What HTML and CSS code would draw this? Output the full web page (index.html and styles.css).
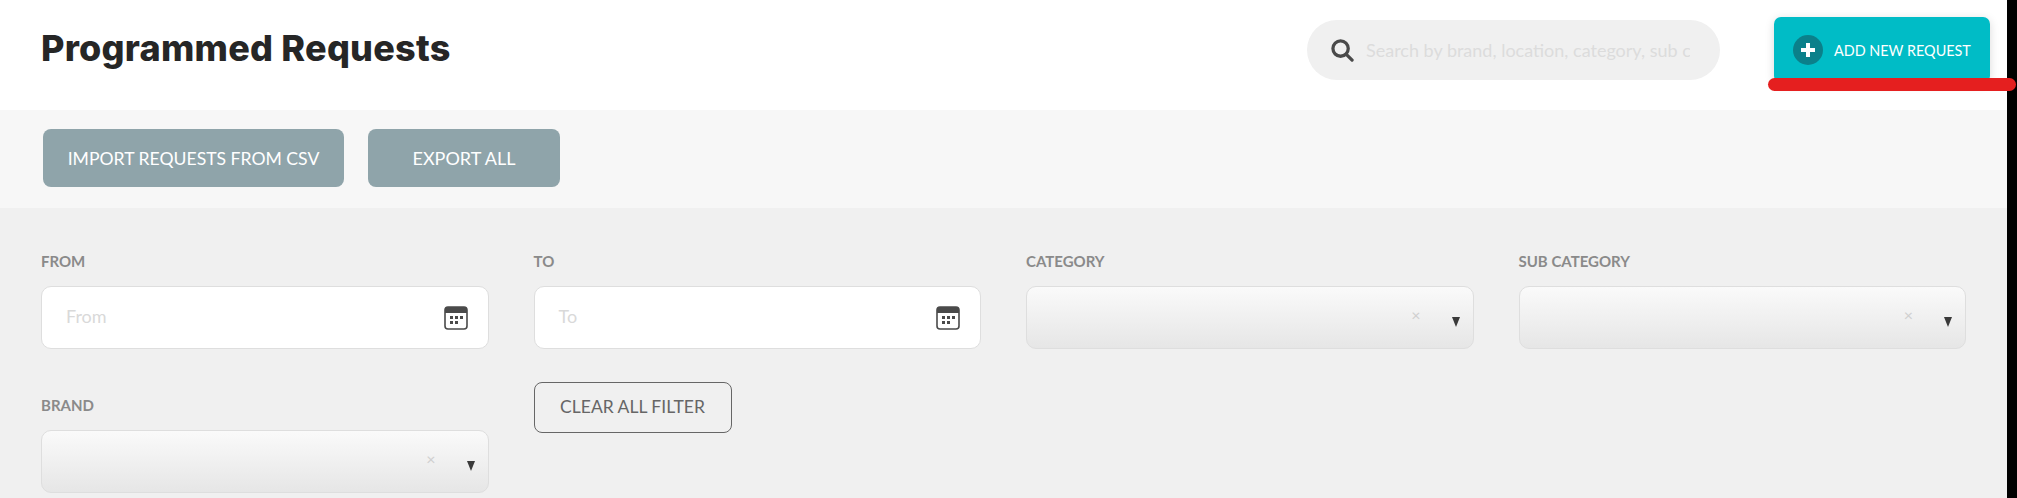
FILE: index.html
```html
<!DOCTYPE html>
<html lang="en">
<head>
  <meta charset="UTF-8">
  <title>Programmed Requests</title>
  <link rel="stylesheet" href="styles.css">
</head>
<body>

<div class="sivu">
  <header class="otsikko">
    <h1>Programmed Requests</h1>
    <div class="haku">
      <svg class="haku-ikoni" viewBox="0 0 24 24" width="23" height="23"><circle cx="10" cy="10" r="8" fill="none" stroke="#4a4a4a" stroke-width="3.4"/><path d="M16 16l6 6" stroke="#4a4a4a" stroke-width="3.4" stroke-linecap="round"/></svg>
      <span class="haku-teksti">Search by brand, location, category, sub c</span>
    </div>
    <a class="lisaa-nappi">
      <span class="plus">
        <svg viewBox="0 0 16 16" width="16" height="16"><path d="M8 1v14M1 8h14" stroke="#fff" stroke-width="4"/></svg>
      </span>
      ADD NEW REQUEST
    </a>
  </header>

  <div class="toiminnot">
    <a class="harmaa-nappi tuonti">IMPORT REQUESTS FROM CSV</a>
    <a class="harmaa-nappi vienti">EXPORT ALL</a>
  </div>

  <section class="suodattimet">
    <div class="kentta">
      <label>FROM</label>
      <div class="syote">
        <span class="vihje">From</span>
        <svg class="kalenteri" viewBox="0 0 24 24" width="24" height="24"><rect x="1" y="1" width="22" height="22" rx="3" fill="#fff" stroke="#4a4a4a" stroke-width="1.6"/><path d="M1 4a3 3 0 0 1 3-3h16a3 3 0 0 1 3 3v3H1z" fill="#4a4a4a"/><path d="M6 10h3v3H6zM11 10h3v3h-3zM16 10h3v3h-3zM6 15h3v3H6zM11 15h3v3h-3z" fill="#4a4a4a"/></svg>
      </div>
    </div>
    <div class="kentta">
      <label>TO</label>
      <div class="syote">
        <span class="vihje">To</span>
        <svg class="kalenteri" viewBox="0 0 24 24" width="24" height="24"><rect x="1" y="1" width="22" height="22" rx="3" fill="#fff" stroke="#4a4a4a" stroke-width="1.6"/><path d="M1 4a3 3 0 0 1 3-3h16a3 3 0 0 1 3 3v3H1z" fill="#4a4a4a"/><path d="M6 10h3v3H6zM11 10h3v3h-3zM16 10h3v3h-3zM6 15h3v3H6zM11 15h3v3h-3z" fill="#4a4a4a"/></svg>
      </div>
    </div>
    <div class="kentta">
      <label>CATEGORY</label>
      <div class="valinta"><span class="risti">×</span><span class="nuoli"></span></div>
    </div>
    <div class="kentta">
      <label>SUB CATEGORY</label>
      <div class="valinta"><span class="risti">×</span><span class="nuoli"></span></div>
    </div>
    <div class="kentta brandi">
      <label>BRAND</label>
      <div class="valinta"><span class="risti">×</span><span class="nuoli"></span></div>
    </div>
    <div class="kentta">
      <a class="tyhjenna">CLEAR ALL FILTER</a>
    </div>
  </section>
</div>

<div class="punainen-viiva"></div>

</body>
</html>
```

FILE: styles.css
```css
html, body {
  margin: 0;
  height: 498px;
  overflow: hidden;
  background: #000;
}
body {
  font-family: Lato, "Liberation Sans", sans-serif;
  position: relative;
}
a {
  text-decoration: none;
}
.sivu {
  width: 2007px;
  height: 498px;
  background: #f0f0f0;
}
.otsikko {
  height: 110px;
  padding: 0 17px 10px 41px;
  background: #fff;
  display: flex;
  align-items: center;
  box-sizing: border-box;
}
h1 {
  margin: 0 0 4px 0;
  font-family: Inter, Lato, sans-serif;
  font-size: 36px;
  font-weight: 800;
  letter-spacing: 0.24px;
  color: #262626;
  flex: 1;
}
.haku {
  width: 413px;
  height: 60px;
  margin-right: 54px;
  padding-left: 24px;
  background: #f0f0f0;
  border-radius: 30px;
  display: flex;
  align-items: center;
  box-sizing: border-box;
}
.haku-ikoni {
  flex: none;
}
.haku-teksti {
  margin-left: 12px;
  font-size: 18px;
  color: #dcdcdc;
  white-space: nowrap;
  overflow: hidden;
  width: 324px;
}
.lisaa-nappi {
  width: 216px;
  height: 66px;
  padding-left: 19px;
  background: #00bcc6;
  border-radius: 7px;
  box-shadow: 0 2px 10px rgba(0,0,0,0.15);
  color: #fff;
  font-size: 14.4px;
  display: flex;
  align-items: center;
  box-sizing: border-box;
}
.plus {
  width: 30px;
  height: 30px;
  margin-right: 11px;
  border-radius: 50%;
  background: #0b808a;
  display: flex;
  align-items: center;
  justify-content: center;
}
.toiminnot {
  height: 98px;
  padding: 19px 0 0 43px;
  background: #f7f7f7;
  display: flex;
  align-items: flex-start;
  gap: 24px;
  box-sizing: border-box;
}
.harmaa-nappi {
  height: 58px;
  background: #8fa4aa;
  border-radius: 8px;
  color: #fff;
  font-size: 18px;
  display: flex;
  align-items: center;
  justify-content: center;
  box-sizing: border-box;
}
.tuonti {
  width: 301px;
  font-size: 17.6px;
}
.vienti {
  width: 192px;
}
.suodattimet {
  display: grid;
  grid-template-columns: repeat(4, 447.5px);
  column-gap: 45px;
  row-gap: 33px;
  padding: 44px 0 0 41px;
}
.kentta label {
  display: block;
  font-size: 15px;
  font-weight: 700;
  color: #8a8a8a;
  line-height: 18px;
  margin-bottom: 16px;
}
.brandi {
  margin-top: 14px;
}
.syote, .valinta {
  height: 63px;
  box-sizing: border-box;
  border: 1px solid #dedede;
  border-radius: 10px;
  position: relative;
  display: flex;
  align-items: center;
}
.syote {
  background: #fff;
  padding: 0 20px 0 24px;
  justify-content: space-between;
}
.vihje {
  font-size: 18px;
  color: #d9d9d9;
  margin-bottom: 4px;
}
.valinta {
  background: linear-gradient(#fafafa, #e6e6e6);
}
.risti {
  position: absolute;
  right: 52px;
  top: 18px;
  font-size: 16px;
  color: #cfcfcf;
}
.nuoli {
  position: absolute;
  right: 13px;
  top: 30px;
  border-left: 4px solid transparent;
  border-right: 4px solid transparent;
  border-top: 10px solid #3a3a3a;
}
.tyhjenna {
  display: flex;
  align-items: center;
  justify-content: center;
  width: 198px;
  height: 51px;
  padding-bottom: 2px;
  box-sizing: border-box;
  border: 1px solid #666;
  border-radius: 8px;
  color: #666;
  font-size: 17.5px;
}
.punainen-viiva {
  position: absolute;
  left: 1768px;
  top: 78px;
  width: 248px;
  height: 13px;
  border-radius: 7px;
  background: #e51f1f;
}
```
